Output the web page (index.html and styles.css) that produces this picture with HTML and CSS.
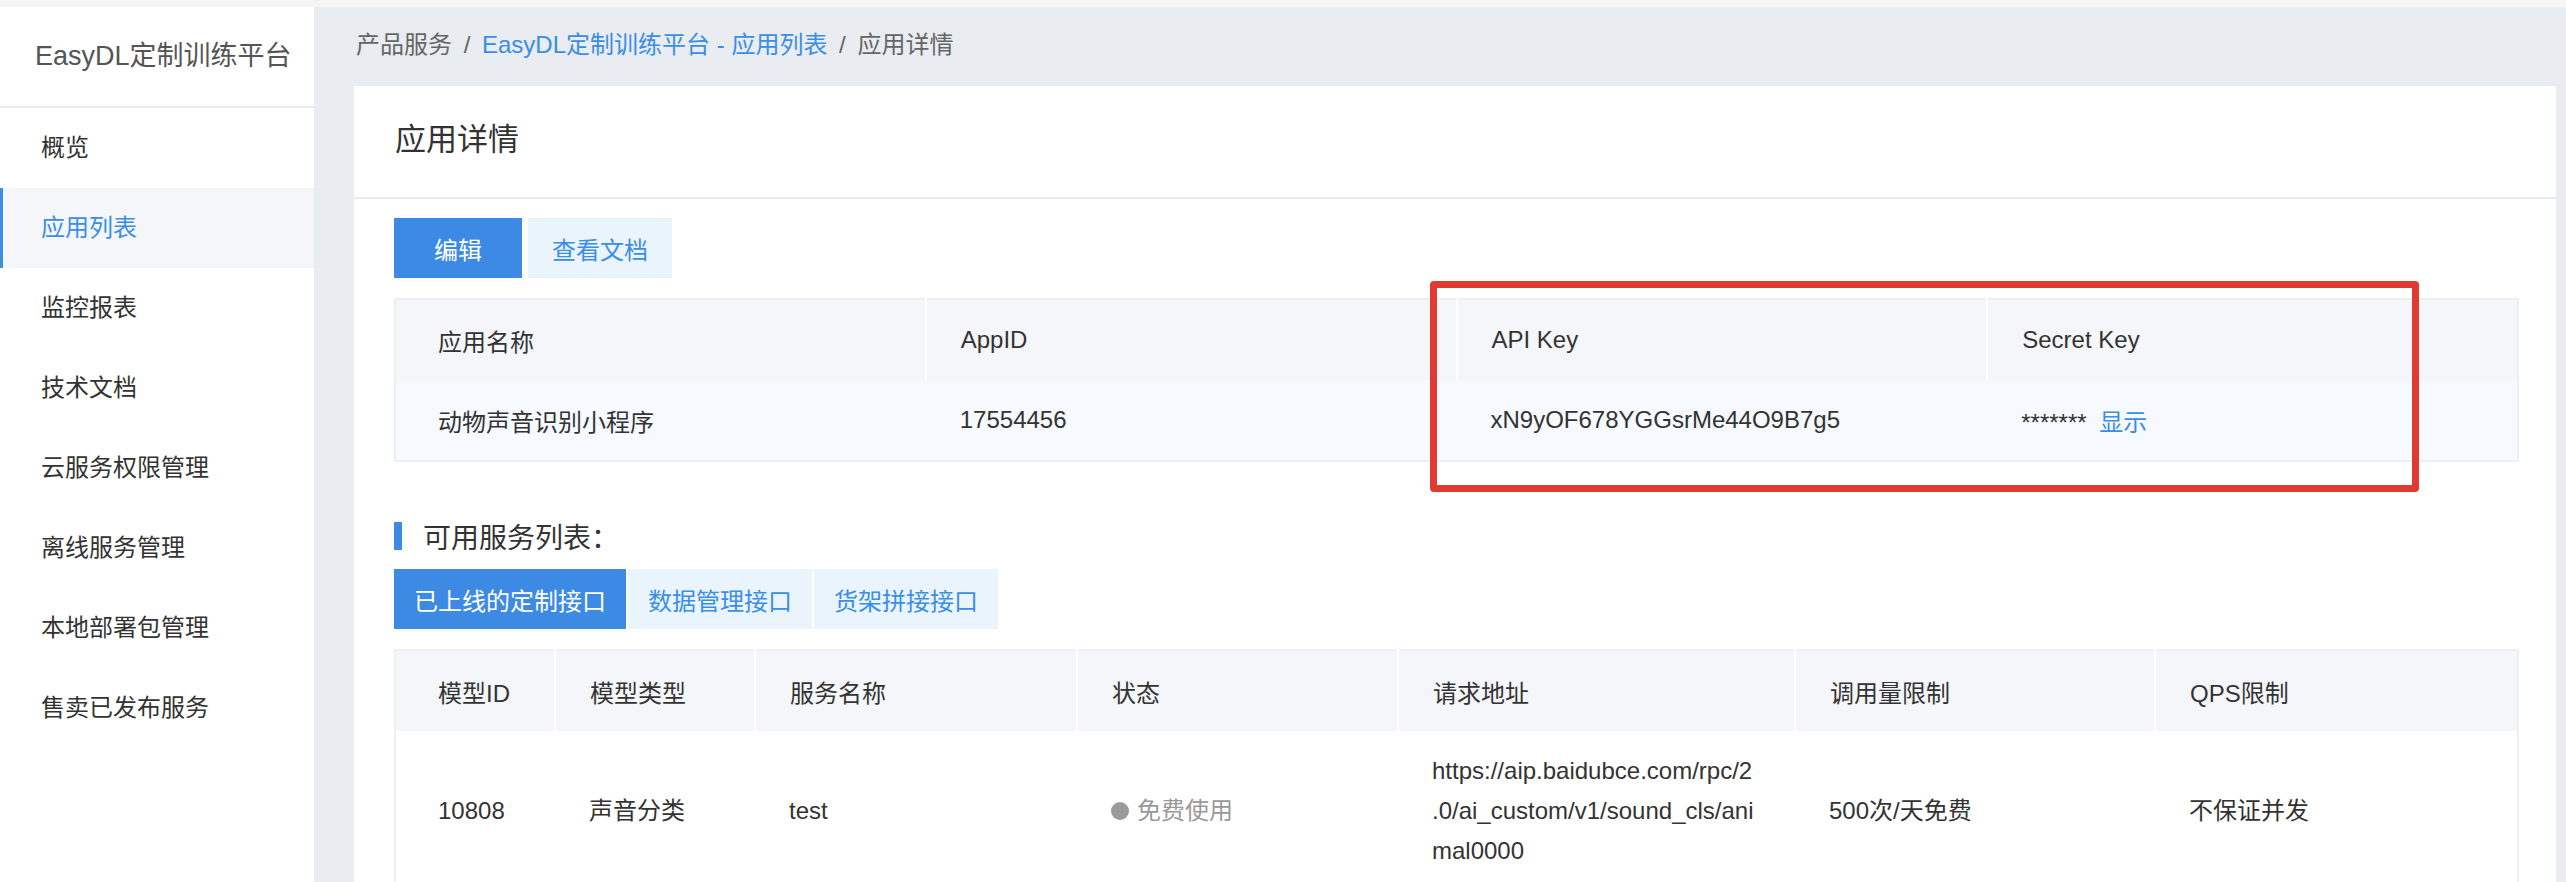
FILE: index.html
```html
<!DOCTYPE html>
<html lang="zh-CN">

<head>
    <meta charset="UTF-8">
    <meta name="viewport" content="width=device-width, initial-scale=1.0">
    <title>应用详情 - EasyDL定制训练平台</title>
    <link rel="stylesheet" href="styles.css">
</head>

<body>
    <div class="layout">
        <!-- 侧边栏 -->
        <div class="sidebar">
            <div class="sidebar-title">EasyDL定制训练平台</div>
            <a href="#" class="menu-item">概览</a>
            <a href="#" class="menu-item active">应用列表</a>
            <a href="#" class="menu-item">监控报表</a>
            <a href="#" class="menu-item">技术文档</a>
            <a href="#" class="menu-item">云服务权限管理</a>
            <a href="#" class="menu-item">离线服务管理</a>
            <a href="#" class="menu-item">本地部署包管理</a>
            <a href="#" class="menu-item">售卖已发布服务</a>
        </div>

        <!-- 主内容 -->
        <div class="main">
            <div class="breadcrumb">
                <span>产品服务</span>
                <span class="sep">/</span>
                <a href="#">EasyDL定制训练平台 - 应用列表</a>
                <span class="sep">/</span>
                <span>应用详情</span>
            </div>

            <div class="card">
                <div class="card-header">应用详情</div>
                <div class="card-body">
                    <div class="actions">
                        <button class="btn btn-primary btn-edit">编辑</button>
                        <button class="btn btn-light">查看文档</button>
                    </div>

                    <!-- 应用信息 -->
                    <div class="info-wrap">
                        <table class="info-table">
                            <thead>
                                <tr>
                                    <th>应用名称</th>
                                    <th>AppID</th>
                                    <th>API Key</th>
                                    <th>Secret Key</th>
                                </tr>
                            </thead>
                            <tbody>
                                <tr>
                                    <td>动物声音识别小程序</td>
                                    <td>17554456</td>
                                    <td>xN9yOF678YGGsrMe44O9B7g5</td>
                                    <td>******* <a href="#" class="link">显示</a></td>
                                </tr>
                            </tbody>
                        </table>
                        <!-- 标注框 -->
                        <div class="mark-box"></div>
                    </div>

                    <div class="section-title">可用服务列表：</div>

                    <div class="tabs">
                        <button class="btn btn-primary">已上线的定制接口</button>
                        <button class="btn btn-light">数据管理接口</button>
                        <button class="btn btn-light">货架拼接接口</button>
                    </div>

                    <!-- 服务列表 -->
                    <table class="service-table">
                        <colgroup>
                            <col class="c-id">
                            <col class="c-type">
                            <col class="c-name">
                            <col class="c-status">
                            <col class="c-url">
                            <col class="c-limit">
                            <col class="c-qps">
                        </colgroup>
                        <thead>
                            <tr>
                                <th>模型ID</th>
                                <th>模型类型</th>
                                <th>服务名称</th>
                                <th>状态</th>
                                <th>请求地址</th>
                                <th>调用量限制</th>
                                <th>QPS限制</th>
                            </tr>
                        </thead>
                        <tbody>
                            <tr>
                                <td>10808</td>
                                <td>声音分类</td>
                                <td>test</td>
                                <td><span class="status"><i class="dot"></i>免费使用</span></td>
                                <td class="url">https://aip.baidubce.com/rpc/2.0/ai_custom/v1/sound_cls/animal0000</td>
                                <td>500次/天免费</td>
                                <td>不保证并发</td>
                            </tr>
                        </tbody>
                    </table>
                </div>
            </div>
        </div>
    </div>
</body>

</html>
```

FILE: styles.css
```css
body {
    font-family: "Liberation Sans", "Noto Sans CJK SC", sans-serif;
    margin: 0;
    padding-top: 7px;
    background-color: #f5f5f5;
    color: #333;
    overflow: hidden;
}

.layout {
    display: flex;
    min-height: calc(100vh - 7px);
}

/* 侧边栏 */
.sidebar {
    width: 314px;
    flex-shrink: 0;
    background-color: #fff;
}

.sidebar-title {
    height: 99px;
    line-height: 99px;
    padding-left: 35px;
    font-size: 27px;
    color: #555;
    border-bottom: 2px solid #e9ebef;
}

.menu-item {
    display: block;
    height: 80px;
    line-height: 80px;
    padding-left: 41px;
    font-size: 24px;
    color: #333;
    text-decoration: none;
}

.menu-item.active {
    background-color: #f4f6fa;
    color: #3a8ee6;
    border-left: 3px solid #3a8ee6;
    padding-left: 38px;
}

/* 主内容 */
.main {
    flex: 1;
    background-color: #e9ecf0;
    padding: 0 12px 0 40px;
}

.breadcrumb {
    height: 79px;
    line-height: 76px;
    padding-left: 2px;
    font-size: 24px;
    color: #666;
}

.breadcrumb a {
    color: #3a8ee6;
    text-decoration: none;
}

.breadcrumb .sep {
    margin: 0 5px;
}

.card {
    background-color: #fff;
    min-height: 800px;
}

.card-header {
    height: 111px;
    line-height: 108px;
    padding-left: 41px;
    font-size: 31px;
    color: #333;
    border-bottom: 2px solid #e8eaed;
}

.card-body {
    padding: 19px 37px 0 40px;
}

.btn {
    height: 60px;
    padding: 0 20px;
    border: none;
    font-family: inherit;
    font-size: 24px;
    cursor: pointer;
}

.btn-primary {
    background-color: #3d8ae5;
    color: #fff;
}

.btn-light {
    background-color: #eaf4fd;
    color: #3a8ee6;
}

.actions {
    display: flex;
    gap: 6px;
}

.actions .btn-edit {
    width: 128px;
}

.actions .btn-light {
    width: 144px;
}

/* 应用信息表 */
.info-wrap {
    position: relative;
    margin-top: 20px;
}

table {
    width: 100%;
    border-collapse: collapse;
    table-layout: fixed;
    font-size: 24px;
}

th {
    font-weight: normal;
    text-align: left;
    background-color: #f5f6f9;
}

.info-table {
    border: 2px solid #edeff2;
}

.info-table th {
    height: 80px;
    padding: 0 34px;
    border-right: 2px solid #fff;
}

.info-table th:last-child {
    border-right: none;
}

.info-table td {
    height: 80px;
    padding: 0 34px;
    background-color: #f6f9fe;
}

.info-table th:first-child,
.info-table td:first-child {
    padding-left: 42px;
}

.link {
    color: #3a8ee6;
    text-decoration: none;
    margin-left: 6px;
}

.mark-box {
    position: absolute;
    left: 1036px;
    top: -17px;
    width: 989px;
    height: 211px;
    box-sizing: border-box;
    border: 7px solid #e03a31;
    border-radius: 4px;
}

/* 服务列表 */
.section-title {
    display: flex;
    align-items: center;
    margin-top: 59px;
    height: 30px;
    font-size: 28px;
    color: #333;
}

.section-title::before {
    content: "";
    width: 8px;
    height: 28px;
    margin-right: 21px;
    background-color: #3d8ae5;
}

.tabs {
    display: flex;
    gap: 2px;
    margin-top: 18px;
}

.service-table {
    margin-top: 20px;
    border: 2px solid #edeff2;
}

.c-id { width: 160px; }
.c-type { width: 200px; }
.c-name { width: 322px; }
.c-status { width: 321px; }
.c-url { width: 397px; }
.c-limit { width: 360px; }
.c-qps { width: 363px; }

.service-table th {
    height: 80px;
    padding: 0 34px;
    border-right: 2px solid #fff;
}

.service-table th:last-child {
    border-right: none;
}

.service-table td {
    padding: 20px 34px;
    line-height: 40px;
    vertical-align: middle;
}

.service-table th:first-child,
.service-table td:first-child {
    padding-left: 42px;
}

.service-table td.url {
    padding-right: 37px;
    word-break: break-all;
    line-break: anywhere;
}

.status {
    display: inline-flex;
    align-items: center;
    color: #999;
}

.status .dot {
    width: 18px;
    height: 18px;
    margin-right: 8px;
    border-radius: 50%;
    background-color: #9b9b9b;
}
```
